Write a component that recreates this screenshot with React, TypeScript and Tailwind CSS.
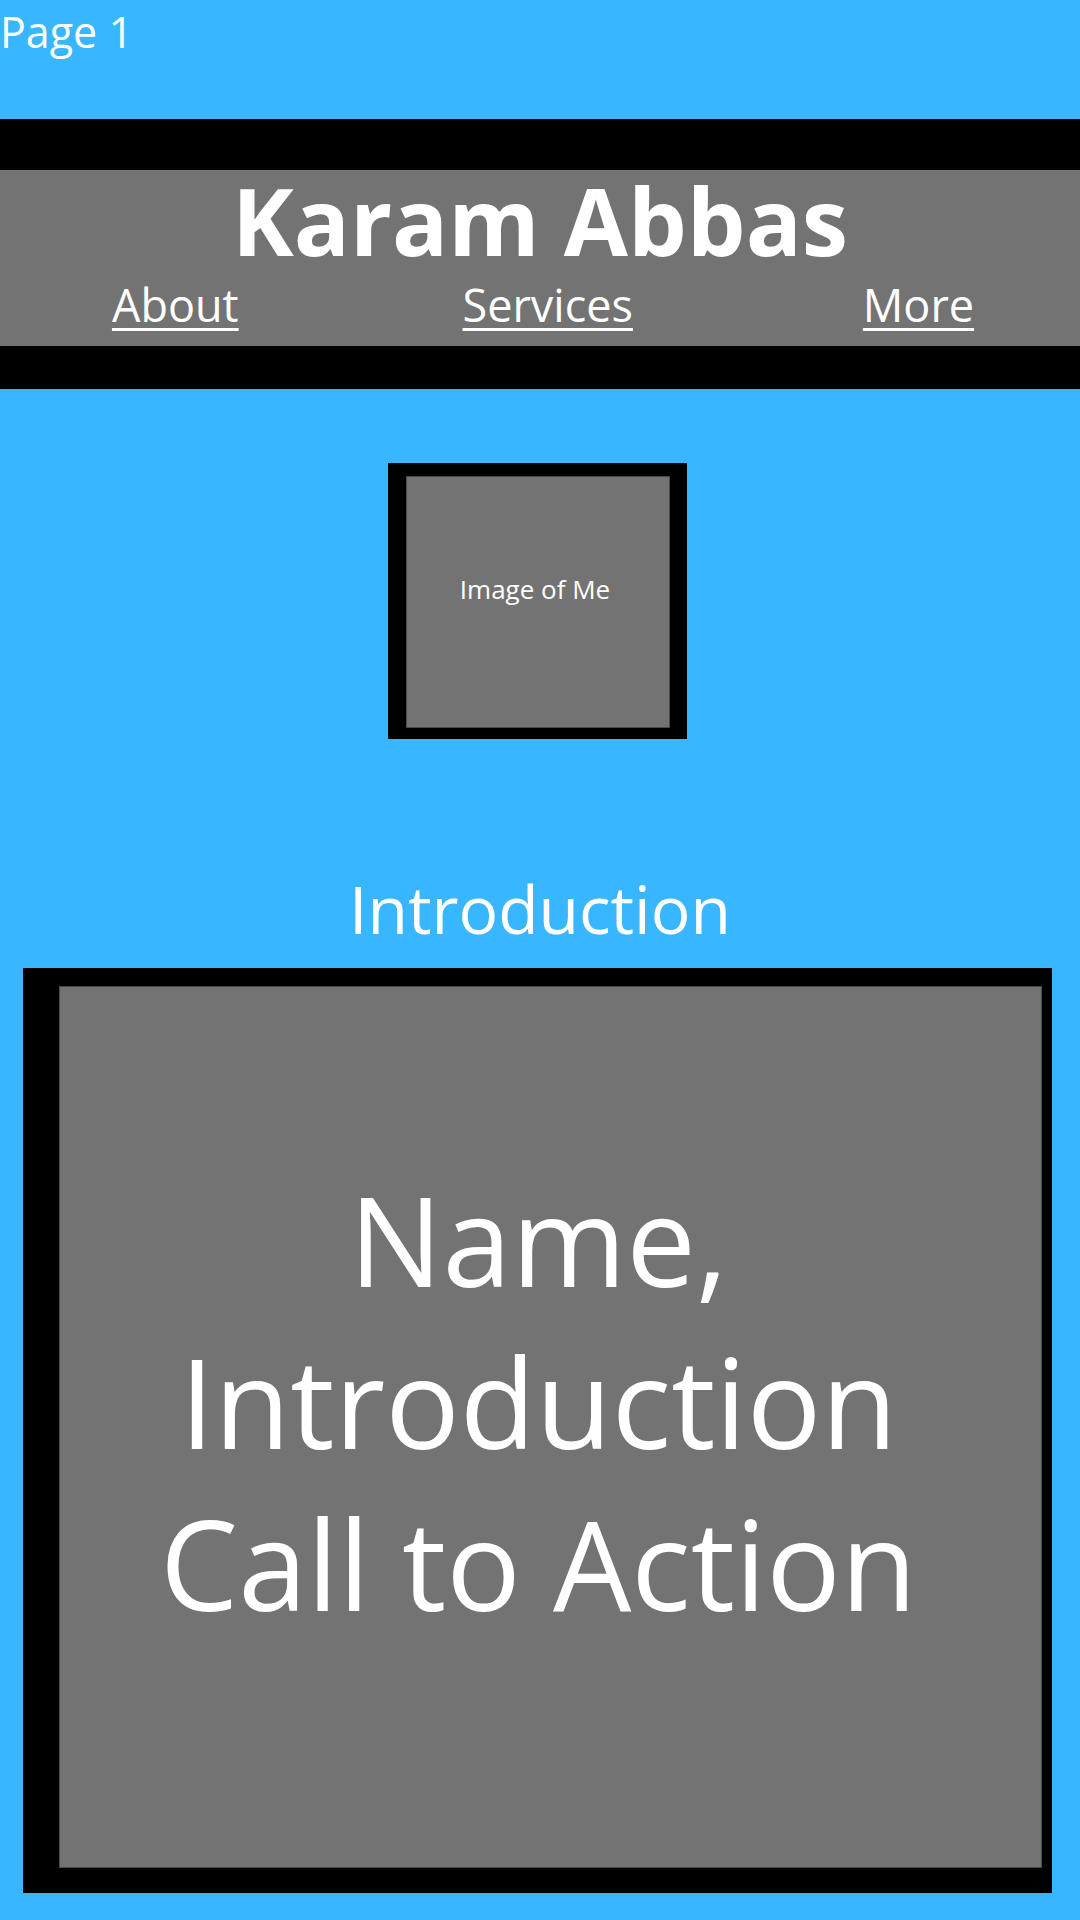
export default function App() {
  return (
    <main className="min-h-[1920px] w-[1080px] overflow-hidden bg-[#38b6ff] font-['Open_Sans',sans-serif] text-white">
      <div className="h-[119px]">
        <p className="pt-[10px] text-[43px] leading-none">Page 1</p>
      </div>

      <header>
        <div className="h-[51px] bg-black" />
        <div className="flex h-[176px] flex-col bg-[#737373] pt-[4px]">
          <h1 className="text-center text-[93px] font-bold leading-[92px]">Karam Abbas</h1>
          <nav className="mt-[16px] flex justify-around text-[45px] leading-none">
            <a className="underline decoration-[3px] underline-offset-[6px]" href="#about">
              About
            </a>
            <a className="underline decoration-[3px] underline-offset-[6px]" href="#services">
              Services
            </a>
            <a className="relative left-[6px] underline decoration-[3px] underline-offset-[6px]" href="#more">
              More
            </a>
          </nav>
        </div>
        <div className="h-[43px] bg-black" />
      </header>

      <section className="mt-[74px] flex justify-center pr-[5px]">
        <div className="h-[276px] w-[299px] border-t-[13px] border-r-[17px] border-b-[11px] border-l-[18px] border-black">
          <div className="h-full w-full border border-[#4a4a4a] bg-[#737373] pt-[99px] pr-[6px] text-center text-[26px] leading-none">
            Image of Me
          </div>
        </div>
      </section>

      <h2 className="mt-[136px] text-center text-[66px] leading-none">Introduction</h2>

      <section className="mt-[27px] ml-[23px] h-[925px] w-[1029px] border-t-[18px] border-r-[10px] border-b-[25px] border-l-[36px] border-black">
        <div className="flex h-full w-full items-center justify-center border border-[#4a4a4a] bg-[#737373] pr-6 pb-[52px]">
          <p className="text-center text-[124px] leading-[162px]">
            Name,
            <br />
            Introduction
            <br />
            Call to Action
          </p>
        </div>
      </section>
    </main>
  );
}
